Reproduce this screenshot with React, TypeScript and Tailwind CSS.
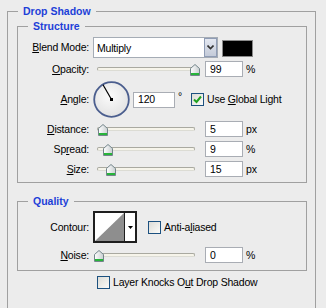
import React from "react";

const U = ({ c }: { c: string }) => <span className="underline underline-offset-[1px]">{c}</span>;

function Thumb({ left }: { left: number }) {
  return (
    <svg
      className="absolute top-[3px]"
      style={{ left }}
      width="10"
      height="12"
      viewBox="0 0 10 12"
    >
      <defs>
        <linearGradient id="tg" x1="0" y1="0" x2="1" y2="0">
          <stop offset="0" stopColor="#ffffff" />
          <stop offset="1" stopColor="#c9cfd1" />
        </linearGradient>
      </defs>
      <path d="M0.5 4.5 L5 0.5 L9.5 4.5 L9.5 11.5 L0.5 11.5 Z" fill="url(#tg)" stroke="#73858a" strokeWidth="1" />
      <rect x="1" y="9" width="8" height="2" fill="#27b43a" />
    </svg>
  );
}

function Slider({ left }: { left: number }) {
  return (
    <div className="relative w-[98px] h-[16px] flex items-center">
      <div className="w-full h-[4px] rounded-full border border-[#a9a9a0] border-b-[#dcdcd4] bg-[#f6f4ea]" />
      <Thumb left={left} />
    </div>
  );
}

function Input({ value, w = "w-[38px]" }: { value: string; w?: string }) {
  return (
    <div className={`${w} h-[16px] bg-white border border-[#a9adb4] pl-[4px] flex items-center text-black leading-[13px]`}>
      {value}
    </div>
  );
}

function Check({ checked }: { checked?: boolean }) {
  return (
    <div className="w-[13px] h-[13px] border border-[#1c5180] bg-gradient-to-br from-[#dcdcd7] to-[#fbfbf9] flex items-center justify-center">
      {checked && (
        <svg width="9" height="9" viewBox="0 0 9 9">
          <path d="M1 4.5 L3.5 7 L8 1.5" fill="none" stroke="#21a121" strokeWidth="2" />
        </svg>
      )}
    </div>
  );
}

function Label({ children }: { children: React.ReactNode }) {
  return <div className="w-[71px] text-right text-black shrink-0">{children}</div>;
}

export default function App() {
  return (
    <div className="w-[326px] h-[308px] bg-[#ececec] overflow-hidden font-['Liberation_Sans',Arial,sans-serif] text-[10.5px] tracking-[-0.2px] leading-[13px] text-black">
      <fieldset className="mt-[5px] ml-[7px] w-[309px] h-[330px] border border-[#a0a0a0]">
        <legend className="ml-[10px] px-[5px] font-bold text-[10.5px] tracking-normal text-[#1d3fd8]">Drop Shadow</legend>

        <fieldset className="mt-[2px] ml-[9px] w-[290px] border border-[#a0a0a0] pb-[5px]">
          <legend className="ml-[10px] px-[5px] font-bold text-[10.5px] tracking-normal text-[#1d3fd8]">Structure</legend>

          {/* Blend mode */}
          <div className="mt-[4px] h-[21px] flex items-center">
            <Label>
              <U c="B" />lend Mode:
            </Label>
            <div className="ml-[4px] w-[125px] h-[21px] bg-white border border-[#a5acb5] flex items-center justify-between">
              <span className="pl-[3px] pt-[2px]">Multiply</span>
              <div className="w-[13px] h-[19px] bg-gradient-to-b from-[#e4e8f1] to-[#c4cbd9] border border-[#8f9cb5] flex items-center justify-center">
                <svg width="7" height="5" viewBox="0 0 7 5">
                  <path d="M0.5 0.5 L3.5 3.5 L6.5 0.5" fill="none" stroke="#333" strokeWidth="1.6" />
                </svg>
              </div>
            </div>
            <div className="ml-[4px] w-[31px] h-[17px] bg-black border border-[#8a8a8a] mt-[1px]" />
          </div>

          {/* Opacity */}
          <div className="mt-[3px] h-[16px] flex items-center">
            <Label>
              <U c="O" />pacity:
            </Label>
            <div className="ml-[8px]">
              <Slider left={93} />
            </div>
            <div className="ml-[10px]">
              <Input value="99" />
            </div>
            <span className="ml-[3px]">%</span>
          </div>

          {/* Angle */}
          <div className="mt-[4px] h-[37px] flex items-center">
            <Label>
              <U c="A" />ngle:
            </Label>
            <div className="ml-[4px] w-[37px] h-[37px] shrink-0">
              <svg width="37" height="37" viewBox="0 0 37 37">
                <defs>
                  <radialGradient id="dg" cx="0.45" cy="0.4" r="0.6">
                    <stop offset="0" stopColor="#fbfbfb" />
                    <stop offset="1" stopColor="#e3e3e3" />
                  </radialGradient>
                </defs>
                <circle cx="18.5" cy="18.5" r="17.3" fill="url(#dg)" stroke="#4b5e8e" strokeWidth="1.8" />
                <line x1="18.5" y1="18.5" x2="10" y2="3.8" stroke="#000" strokeWidth="1.2" />
                <rect x="17" y="17" width="3" height="3" fill="#000" />
              </svg>
            </div>
            <div className="ml-[3px]">
              <Input value="120" w="w-[42px]" />
            </div>
            <span className="ml-[3px] self-start mt-[9px] w-[13px]">°</span>
            <Check checked />
            <span className="ml-[3px]">
              Use <U c="G" />lobal Light
            </span>
          </div>

          {/* Distance */}
          <div className="mt-[3px] h-[16px] flex items-center">
            <Label>
              <U c="D" />istance:
            </Label>
            <div className="ml-[8px]">
              <Slider left={1} />
            </div>
            <div className="ml-[10px]">
              <Input value="5" />
            </div>
            <span className="ml-[3px]">px</span>
          </div>

          {/* Spread */}
          <div className="mt-[4px] h-[16px] flex items-center">
            <Label>
              Sp<U c="r" />ead:
            </Label>
            <div className="ml-[8px]">
              <Slider left={6} />
            </div>
            <div className="ml-[10px]">
              <Input value="9" />
            </div>
            <span className="ml-[3px]">%</span>
          </div>

          {/* Size */}
          <div className="mt-[4px] h-[16px] flex items-center">
            <Label>
              <U c="S" />ize:
            </Label>
            <div className="ml-[8px]">
              <Slider left={9} />
            </div>
            <div className="ml-[10px]">
              <Input value="15" />
            </div>
            <span className="ml-[3px]">px</span>
          </div>
        </fieldset>

        <fieldset className="mt-[12px] ml-[9px] w-[290px] border border-[#a0a0a0] pb-[7px]">
          <legend className="ml-[10px] px-[5px] font-bold text-[10.5px] tracking-normal text-[#1d3fd8]">Quality</legend>

          <div className="mt-[3px] h-[32px] flex items-center">
            <Label>Contour:</Label>
            <div className="ml-[4px] w-[44px] h-[32px] border-2 border-[#1e1e1e] bg-white flex">
              <svg width="29" height="28" viewBox="0 0 29 28" className="shrink-0">
                <polygon points="0,28 29,0 29,28" fill="#8e8e8e" />
              </svg>
              <div className="w-[11px] h-full border-l border-[#1e1e1e] flex items-center justify-center">
                <svg width="5" height="3" viewBox="0 0 5 3">
                  <polygon points="0,0 5,0 2.5,3" fill="#000" />
                </svg>
              </div>
            </div>
            <div className="ml-[11px]">
              <Check />
            </div>
            <span className="ml-[3px]">
              Anti-a<U c="l" />iased
            </span>
          </div>

          <div className="mt-[4px] h-[16px] flex items-center">
            <Label>
              <U c="N" />oise:
            </Label>
            <div className="ml-[8px]">
              <Slider left={-3} />
            </div>
            <div className="ml-[10px]">
              <Input value="0" />
            </div>
            <span className="ml-[3px]">%</span>
          </div>
        </fieldset>

        <div className="mt-[5px] ml-[89px] flex items-center">
          <Check />
          <span className="ml-[3px]">
            Layer Knocks O<U c="u" />t Drop Shadow
          </span>
        </div>
      </fieldset>
    </div>
  );
}
